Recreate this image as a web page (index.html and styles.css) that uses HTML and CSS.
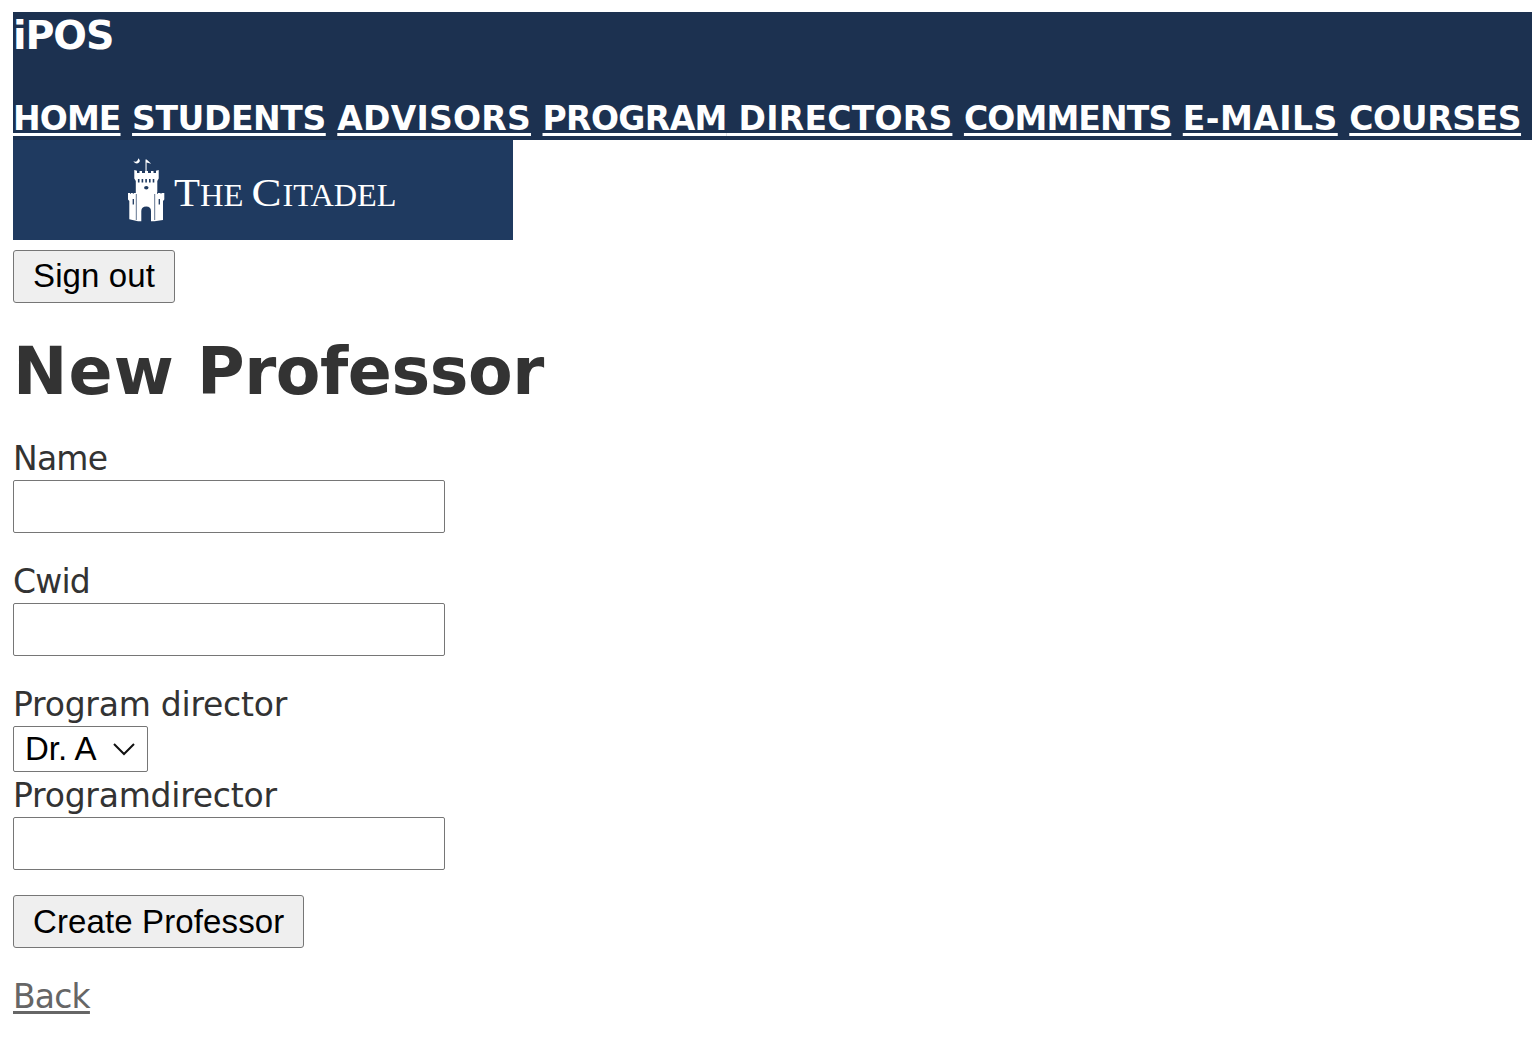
FILE: index.html
```html
<!DOCTYPE html>
<html lang="en">
<head>
<meta charset="utf-8">
<title>iPOS</title>
<link rel="stylesheet" href="styles.css">
</head>
<body>
<header class="banner">
  <div class="brand">iPOS</div>
  <nav class="nav">
    <a class="tight" href="#">HOME</a>
    <a class="snug" href="#">STUDENTS</a>
    <a class="loose" href="#">ADVISORS</a>
    <a class="loose" href="#"><span class="program">PROGRAM</span> DIRECTORS</a>
    <a class="tight" href="#">COMMENTS</a>
    <a class="wide" href="#">E-MAILS</a>
    <a class="snug" href="#">COURSES</a>
  </nav>
</header>
<svg class="logo" viewBox="0 0 500 100" role="img" aria-label="The Citadel">
  <rect width="500" height="100" fill="#1f3a60"/>
  <g fill="#fff">
    <path d="M120.300 21.200Q124.500 23 125.300 18.200Q128 20.500 126 22.600Q123 24.800 120.300 21.200z"/>
    <path d="M132.500 19.500h1.100l4.600 4.300-4.600-1.300V32h-1.100z"/>
    <path d="M121.300 30L124 30.800V33H126.500V31H129V33H132V31H135V33H138V31H140.500V33H143V30.800L145.700 30V38.500L144.300 41V53H151.300V59.500L150 61V80L141.500 81.300H138V71Q138 66.500 133.200 66.500T128.300 71V81.300H125L116.300 79.300V61L115 59.500V53H122.800V41L121.300 38.500z"/>
  </g>
  <g stroke="#1f3a60" fill="none">
    <path d="M125.700 39v3.600M129.400 39v3.600M133.100 39v3.600M136.800 39v3.600M140.500 39v3.600" stroke-width="1.600"/>
    <path d="M120.300 59v5.500M146.300 59v5.500" stroke-width="1.300"/>
    <path d="M123.300 54v26M141.700 54v26M117.500 52v2M120.300 52v2M144.500 52v2M148 52v2" stroke-width=".7"/>
  </g>
  <ellipse cx="133.300" cy="47.800" rx="2.200" ry="1.800" fill="#1f3a60"/>
  <g class="wordmark">
    <text x="161" y="66" font-size="39" textLength="26" lengthAdjust="spacingAndGlyphs">T</text>
    <text x="187" y="66" font-size="32" textLength="43.500" lengthAdjust="spacingAndGlyphs">HE</text>
    <text x="238.500" y="66" font-size="39" textLength="30" lengthAdjust="spacingAndGlyphs">C</text>
    <text x="269.500" y="66" font-size="32" textLength="114" lengthAdjust="spacingAndGlyphs">ITADEL</text>
  </g>
</svg>
<form class="signout"><button class="button button-signout" type="button">Sign out</button></form>
<h1 class="title"><span class="title-lead">New</span> Professor</h1>
<form class="form">
  <div class="field"><label class="tight" for="name">Name</label><input id="name" type="text"></div>
  <div class="field"><label class="tight" for="cwid">Cwid</label><input id="cwid" type="text"></div>
  <div class="field field-select">
    <label class="label-long" for="director">Program director</label>
    <div class="select" id="director" role="combobox" tabindex="0">Dr. A
      <svg class="chevron" viewBox="0 0 22 13"><path d="M1 1l10 10 10-10"/></svg>
    </div>
  </div>
  <div class="field field-last"><label class="label-long" for="pd">Programdirector</label><input id="pd" type="text"></div>
  <button class="button" type="button">Create Professor</button>
</form>
<a class="back tight" href="#">Back</a>
</body>
</html>
```
FILE: styles.css
```css
body {
  margin: 12px 0 0 13px;
  background: #fff;
  color: #333;
  font: 33px/43px Verdana, "DejaVu Sans", sans-serif;
  overflow: hidden;
}

.banner {
  box-sizing: border-box;
  height: 128px;
  background: #1c3150;
  color: #fff;
  font-weight: bold;
}

.brand {
  height: 85px;
  font-size: 39.6px;
  line-height: 47px;
  letter-spacing: -1.1px;
}

.nav {
  display: flex;
  gap: 11.5px;
  white-space: nowrap;
}

.nav a {
  color: #fff;
  text-decoration: underline 3px;
  text-decoration-skip-ink: none;
  text-underline-offset: 3px;
}

.tight { letter-spacing: -0.8px; }
.nav .tight { letter-spacing: -0.88px; }
.snug { letter-spacing: -0.4px; }
.program { letter-spacing: -0.6px; }
.loose { letter-spacing: 0.25px; }
.wide { letter-spacing: 0.47px; }
.label-long { letter-spacing: -0.24px; }

.logo {
  display: block;
  width: 500px;
  height: 100px;
}

.wordmark {
  fill: #fff;
  font-family: "Liberation Serif", serif;
}

.signout {
  margin-top: 10px;
}

.button {
  display: block;
  box-sizing: border-box;
  height: 53px;
  padding: 0 19px;
  border: 1px solid #767676;
  border-radius: 3px;
  background: #efefef;
  color: #000;
  font: 33px/49px "Liberation Sans", Arial, sans-serif;
  letter-spacing: 0.12px;
}

.button-signout {
  padding-bottom: 2px;
}

.title {
  margin: 29px 0 25px;
  font-size: 65px;
  line-height: 80px;
  letter-spacing: -0.45px;
}

.title-lead {
  letter-spacing: 1.1px;
}

.field {
  display: flex;
  flex-direction: column;
  align-items: flex-start;
  margin-bottom: 27px;
}

.field input {
  box-sizing: border-box;
  width: 432px;
  height: 53px;
  border: 1px solid #767676;
  border-radius: 2px;
  background: #fff;
}

.field-select {
  margin-bottom: 2px;
}

.field-last {
  margin-bottom: 25px;
}

.select {
  display: flex;
  align-items: center;
  justify-content: space-between;
  box-sizing: border-box;
  width: 135px;
  height: 46px;
  padding: 0 12px 0 11px;
  border: 1px solid #767676;
  border-radius: 2px;
  color: #000;
  font: 33px/46px "Liberation Sans", Arial, sans-serif;
}

.chevron {
  width: 22px;
  height: 13px;
  fill: none;
  stroke: #111;
  stroke-width: 2;
}

.back {
  display: inline-block;
  margin-top: 27px;
  color: #666;
  text-decoration: underline 3px;
  text-underline-offset: 3px;
}
```
